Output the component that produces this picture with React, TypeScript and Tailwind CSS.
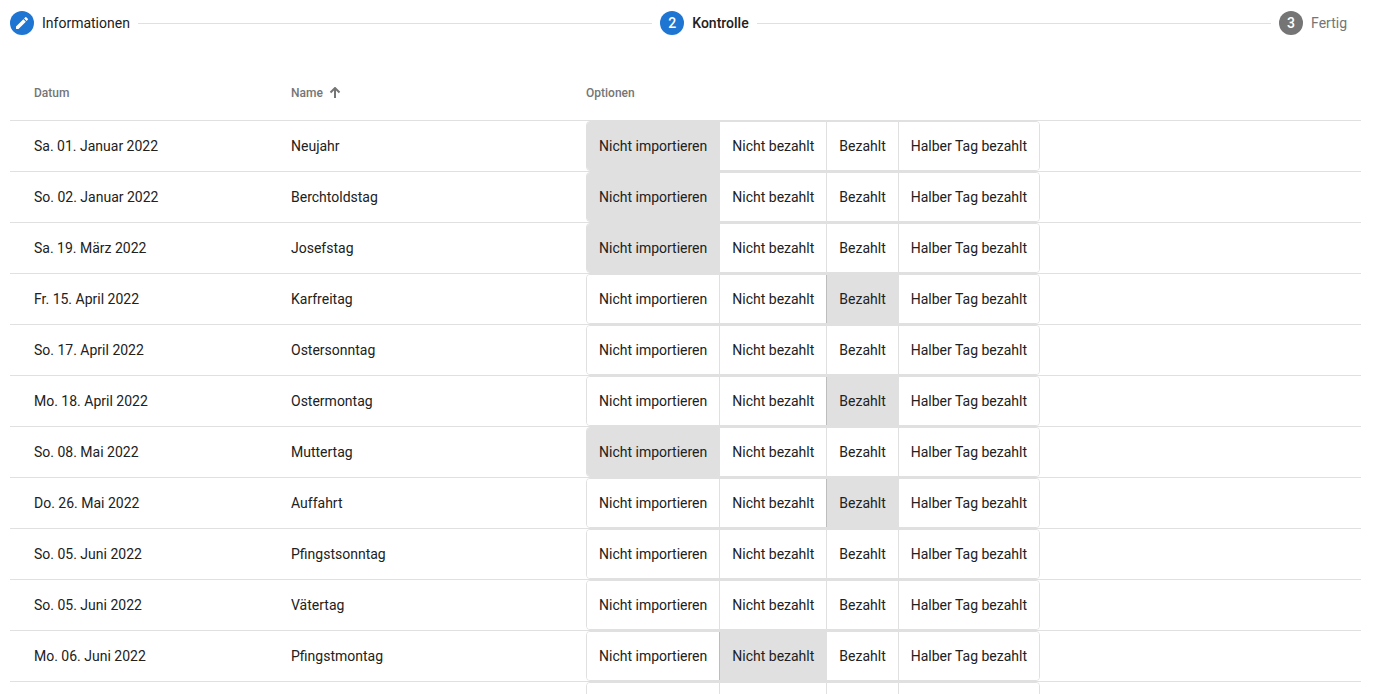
import { useState } from "react";
import clsx from "clsx";

const OPTIONS = ["Nicht importieren", "Nicht bezahlt", "Bezahlt", "Halber Tag bezahlt"];

type Holiday = { date: string; name: string; option: number | null };

const HOLIDAYS: Holiday[] = [
  { date: "Sa. 01. Januar 2022", name: "Neujahr", option: 0 },
  { date: "So. 02. Januar 2022", name: "Berchtoldstag", option: 0 },
  { date: "Sa. 19. März 2022", name: "Josefstag", option: 0 },
  { date: "Fr. 15. April 2022", name: "Karfreitag", option: 2 },
  { date: "So. 17. April 2022", name: "Ostersonntag", option: null },
  { date: "Mo. 18. April 2022", name: "Ostermontag", option: 2 },
  { date: "So. 08. Mai 2022", name: "Muttertag", option: 0 },
  { date: "Do. 26. Mai 2022", name: "Auffahrt", option: 2 },
  { date: "So. 05. Juni 2022", name: "Pfingstsonntag", option: null },
  { date: "So. 05. Juni 2022", name: "Vätertag", option: null },
  { date: "Mo. 06. Juni 2022", name: "Pfingstmontag", option: 1 },
  { date: "Do. 16. Juni 2022", name: "Fronleichnam", option: null },
];

function PencilIcon() {
  return (
    <svg viewBox="0 0 24 24" className="size-4" fill="currentColor" aria-hidden="true">
      <path d="M3 17.25V21h3.75L17.81 9.94l-3.75-3.75L3 17.25zM20.71 7.04c.39-.39.39-1.02 0-1.41l-2.34-2.34c-.39-.39-1.02-.39-1.41 0l-1.83 1.83 3.75 3.75 1.83-1.83z" />
    </svg>
  );
}

function SortArrow() {
  return (
    <svg viewBox="0 0 12 12" className="size-3" fill="none" stroke="currentColor" strokeWidth="2" aria-hidden="true">
      <path d="M6 11V1.5M1.5 5.5L6 1L10.5 5.5" />
    </svg>
  );
}

function Stepper() {
  return (
    <nav aria-label="Schritte" className="flex h-6 items-center gap-2 pr-3.5">
      <button type="button" className="flex items-center gap-2">
        <span className="flex size-6 items-center justify-center rounded-full bg-[#1f75d2] text-white">
          <PencilIcon />
        </span>
        <span>Informationen</span>
      </button>
      <div className="h-px flex-1 bg-[#e0e0e0]" />
      <button type="button" aria-current="step" className="flex items-center gap-2 font-medium">
        <span className="flex size-6 items-center justify-center rounded-full bg-[#1f75d2] text-white">2</span>
        <span>Kontrolle</span>
      </button>
      <div className="h-px flex-1 bg-[#e0e0e0]" />
      <button type="button" className="flex items-center gap-2 text-[#757575]">
        <span className="flex size-6 items-center justify-center rounded-full bg-[#757575] font-medium text-white">3</span>
        <span>Fertig</span>
      </button>
    </nav>
  );
}

function OptionGroup({ label, initial }: { label: string; initial: number | null }) {
  const [selected, setSelected] = useState(initial);
  return (
    <div role="group" aria-label={label} className="inline-flex overflow-hidden rounded border border-[#e0e0e0] align-top">
      {OPTIONS.map((option, i) => (
        <button
          key={option}
          type="button"
          aria-pressed={selected === i}
          onClick={() => setSelected(i)}
          className={clsx(
            "h-12 px-3 whitespace-nowrap",
            i > 0 && "border-l",
            selected === i ? "border-[#bdbdbd] bg-[#e0e0e0]" : "border-[#e0e0e0] bg-white",
          )}
        >
          {option}
        </button>
      ))}
    </div>
  );
}

export default function App() {
  return (
    <main className="h-screen overflow-hidden bg-white pt-[11px] pr-[15px] pl-2.5 font-[Roboto,sans-serif] text-sm text-[#212121]">
      <Stepper />
      <table className="mt-[30px] w-full table-fixed border-separate border-spacing-0 text-left">
        <thead>
          <tr className="h-14 text-xs text-[#757575]">
            <th className="w-[281px] border-b border-[#e0e0e0] pl-6 font-medium">Datum</th>
            <th className="w-[295px] border-b border-[#e0e0e0] font-medium" aria-sort="ascending">
              <button type="button" className="flex items-center gap-1.5">
                Name
                <SortArrow />
              </button>
            </th>
            <th className="border-b border-[#e0e0e0] font-medium">Optionen</th>
          </tr>
        </thead>
        <tbody>
          {HOLIDAYS.map((h) => (
            <tr key={h.name}>
              <td className="border-b border-[#e0e0e0] pl-6">{h.date}</td>
              <td className="border-b border-[#e0e0e0]">{h.name}</td>
              <td className="border-b border-[#e0e0e0]">
                <OptionGroup label={`Optionen für ${h.name}`} initial={h.option} />
              </td>
            </tr>
          ))}
        </tbody>
      </table>
    </main>
  );
}
